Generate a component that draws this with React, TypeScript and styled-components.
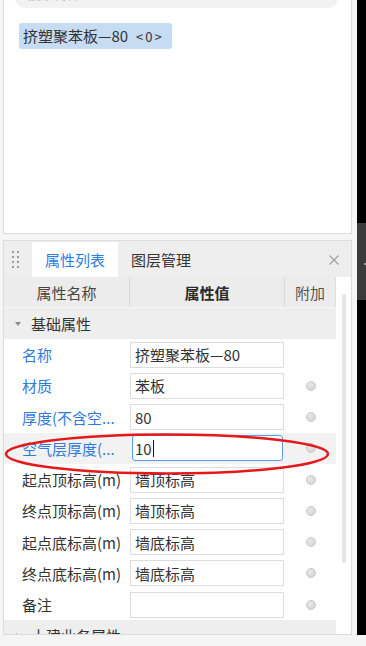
import React from "react";
import styled, { createGlobalStyle } from "styled-components";

const GlobalStyle = createGlobalStyle`
  html, body { margin: 0; padding: 0; background: #000; }
  body {
    font-family: "Noto Sans CJK SC", "Noto Sans", sans-serif;
  }
  * { box-sizing: border-box; }
`;

const Screen = styled.div`
  position: relative;
  display: grid;
  grid-template-columns: 357px 9px;
  width: 366px;
  height: 646px;
  background: #000;
`;

const Main = styled.div`
  display: flex;
  flex-direction: column;
  min-width: 0;
  background: #f5f5f5;
`;

const TopPanel = styled.div`
  height: 234px;
  margin: 0 5px 0 3px;
  background: #fff;
  border: 1px solid #dcdcdc;
  border-top: none;
  display: flex;
  flex-direction: column;
  align-items: flex-start;
  overflow: hidden;
`;

const SearchStub = styled.div`
  margin: -22px 0 0 11px;
  width: 323px;
  height: 30px;
  flex: none;
  border-radius: 10px;
  background: #f2f2f2;
  display: flex;
  align-items: flex-end;
  padding: 0 0 8px 13px;
  font-size: 13px;
  line-height: 13px;
  color: #c8c8c8;
`;

const Tag = styled.div`
  margin: 15px 0 0 15px;
  height: 26px;
  padding: 0 8px 0 4px;
  background: #c6dcf3;
  border-radius: 3px;
  font-size: 15px;
  line-height: 26px;
  color: #333;
  white-space: nowrap;
`;

const TagCount = styled.span`
  margin-left: 8px;
  font-size: 13px;
  letter-spacing: 2px;
`;

const BottomPanel = styled.div`
  height: 395px;
  margin: 6px 5px 0 3px;
  background: #fff;
  border: 1px solid #dcdcdc;
  display: flex;
  flex-direction: column;
  overflow: hidden;
`;

const TabBar = styled.div`
  height: 36px;
  flex: none;
  display: flex;
  align-items: stretch;
  padding-top: 1px;
  background: #eeeeee;
`;

const Handle = styled.div`
  width: 28px;
  display: grid;
  grid-template-columns: repeat(2, 2px);
  grid-auto-rows: 2px;
  column-gap: 3px;
  row-gap: 3px;
  align-content: start;
  padding: 9px 0 0 8px;
`;

const Dot = styled.span`
  width: 2px;
  height: 2px;
  background: #9a9a9a;
`;

const Tab = styled.div<{ $active?: boolean }>`
  display: flex;
  align-items: center;
  padding: 0 13px;
  font-size: 15px;
  color: ${(p) => (p.$active ? "#2b7de6" : "#333")};
  background: ${(p) => (p.$active ? "#fff" : "transparent")};
`;

const Close = styled.div`
  margin: 0 12px 0 auto;
  align-self: center;
  width: 10px;
  height: 10px;
  display: flex;
`;

const Body = styled.div`
  flex: 1;
  min-height: 0;
  display: flex;
`;

const Table = styled.div`
  width: 332px;
  display: flex;
  flex-direction: column;
  overflow: hidden;
`;

const HeaderRow = styled.div`
  flex: none;
  display: grid;
  grid-template-columns: 126px 155px 51px;
  height: 31px;
  background: #ececec;
  border-bottom: 1px solid #f6f6f6;
`;

const HeadCell = styled.div<{ $strong?: boolean; $last?: boolean }>`
  display: flex;
  align-items: center;
  justify-content: center;
  font-size: 15px;
  font-weight: ${(p) => (p.$strong ? 700 : 400)};
  color: ${(p) => (p.$strong ? "#2a2a2a" : p.$last ? "#555" : "#444")};
  border-right: 1px solid ${(p) => (p.$last ? "#dedede" : "#d8d8d8")};
`;

const GroupRow = styled.div`
  flex: none;
  height: 31px;
  display: flex;
  align-items: center;
  gap: 10px;
  padding-left: 11px;
  background: #eeeeee;
  font-size: 15px;
  color: #333;
`;

const Caret = styled.span<{ $open?: boolean }>`
  width: 0;
  height: 0;
  ${(p) =>
    p.$open
      ? `border-left: 3px solid transparent; border-right: 3px solid transparent; border-top: 4px solid #8a8a8a;`
      : `border-top: 3px solid transparent; border-bottom: 3px solid transparent; border-left: 4px solid #8a8a8a; margin-left: 1px; margin-right: 1px;`}
`;

const PropRow = styled.div<{ $active?: boolean }>`
  flex: none;
  display: grid;
  grid-template-columns: 126px 155px 51px;
  height: 31.25px;
  align-items: center;
  background: ${(p) => (p.$active ? "#f2f2f2" : "#fff")};
`;

const Label = styled.div<{ $blue?: boolean }>`
  padding-left: 18px;
  font-size: 15px;
  color: ${(p) => (p.$blue ? "#2f7bdc" : "#333")};
  white-space: nowrap;
  overflow: hidden;
`;

const ValueBox = styled.div<{ $focus?: boolean }>`
  height: 26px;
  margin: ${(p) => (p.$focus ? "0 2px 0 2px" : "0 1px 0 0")};
  border: 1px solid ${(p) => (p.$focus ? "#5c9ce6" : "#dcdcdc")};
  border-radius: ${(p) => (p.$focus ? "3px" : "0")};
  background: #fff;
  padding: 0 ${(p) => (p.$focus ? "2px" : "4px")};
  display: flex;
  align-items: center;
  font-size: 15px;
  color: #333;
  white-space: nowrap;
  overflow: hidden;
`;

const TextCaret = styled.span`
  display: inline-block;
  width: 1px;
  height: 17px;
  margin-left: 1px;
  background: #111;
`;

const Radio = styled.span`
  justify-self: center;
  width: 10px;
  height: 10px;
  border-radius: 50%;
  border: 1px solid #c9c9c9;
  background: radial-gradient(circle at 40% 35%, #e8e8e8, #d0d0d0);
`;

const ScrollTrack = styled.div`
  width: 14px;
  background: #fff;
`;

const Thumb = styled.div`
  margin: 17px 0 0 6px;
  width: 4px;
  height: 269px;
  border-radius: 2px;
  background: #e6e6e6;
`;

const RightStrip = styled.div`
  display: grid;
  grid-template-rows: 223px 77px 1fr 11px;
  background: #000;
`;

const StripSpacer = styled.div`
  background: #000;
`;

const GrayBlock = styled.div`
  background: #3b3b3b;
  display: flex;
  justify-content: flex-end;
  padding-top: 40px;
`;

const Pip = styled.span`
  width: 2px;
  height: 2px;
  background: #9a9a9a;
`;

const StripFoot = styled.div`
  background: #f5f5f5;
`;

const Annotation = styled.svg`
  position: absolute;
  left: 0;
  top: 430px;
  width: 340px;
  height: 50px;
  pointer-events: none;
`;

type Prop = {
  label: string;
  value: string;
  blue?: boolean;
  radio?: boolean;
  focus?: boolean;
};

const props: Prop[] = [
  { label: "名称", value: "挤塑聚苯板—80", blue: true },
  { label: "材质", value: "苯板", blue: true, radio: true },
  { label: "厚度(不含空...", value: "80", blue: true, radio: true },
  { label: "空气层厚度(...", value: "10", blue: true, radio: true, focus: true },
  { label: "起点顶标高(m)", value: "墙顶标高", radio: true },
  { label: "终点顶标高(m)", value: "墙顶标高", radio: true },
  { label: "起点底标高(m)", value: "墙底标高", radio: true },
  { label: "终点底标高(m)", value: "墙底标高", radio: true },
  { label: "备注", value: "", radio: true },
];

export default function App() {
  return (
    <>
      <GlobalStyle />
      <Screen>
        <Main>
          <TopPanel>
            <SearchStub>搜索构件</SearchStub>
            <Tag>
              挤塑聚苯板—80<TagCount>&lt;0&gt;</TagCount>
            </Tag>
          </TopPanel>
          <BottomPanel>
            <TabBar>
              <Handle>
                {Array.from({ length: 8 }).map((_, i) => (
                  <Dot key={i} />
                ))}
              </Handle>
              <Tab $active>属性列表</Tab>
              <Tab>图层管理</Tab>
              <Close>
                <svg width="10" height="10" viewBox="0 0 10 10">
                  <path d="M0.5 0.5L9.5 9.5M9.5 0.5L0.5 9.5" stroke="#a0a0a0" strokeWidth="1.2" fill="none" />
                </svg>
              </Close>
            </TabBar>
            <Body>
              <Table>
                <HeaderRow>
                  <HeadCell>属性名称</HeadCell>
                  <HeadCell $strong>属性值</HeadCell>
                  <HeadCell $last>附加</HeadCell>
                </HeaderRow>
                <GroupRow>
                  <Caret $open />
                  基础属性
                </GroupRow>
                {props.map((p) => (
                  <PropRow key={p.label} $active={p.focus}>
                    <Label $blue={p.blue}>{p.label}</Label>
                    <ValueBox $focus={p.focus}>
                      {p.value}
                      {p.focus && <TextCaret />}
                    </ValueBox>
                    {p.radio ? <Radio /> : <span />}
                  </PropRow>
                ))}
                <GroupRow>
                  <Caret />
                  土建业务属性
                </GroupRow>
              </Table>
              <ScrollTrack>
                <Thumb />
              </ScrollTrack>
            </Body>
          </BottomPanel>
        </Main>
        <RightStrip>
          <StripSpacer />
          <GrayBlock>
            <Pip />
          </GrayBlock>
          <StripSpacer />
          <StripFoot />
        </RightStrip>
        <Annotation viewBox="0 0 340 50">
          <ellipse cx="167" cy="24" rx="161" ry="19.5" fill="none" stroke="#e5181a" strokeWidth="2.5" />
        </Annotation>
      </Screen>
    </>
  );
}
